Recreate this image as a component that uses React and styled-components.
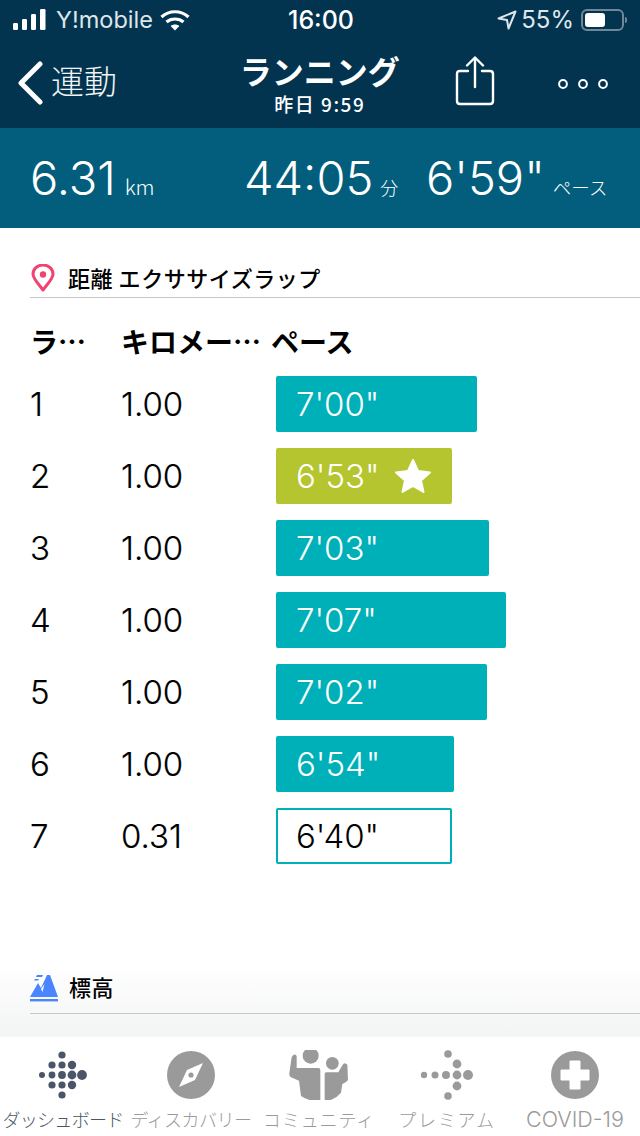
import React from "react";
import styled, { createGlobalStyle } from "styled-components";

const Global = createGlobalStyle`
  html, body { margin: 0; padding: 0; background: #fff; }
  * { box-sizing: border-box; }
`;
const SANS = `"Liberation Sans", "Noto Sans CJK JP", sans-serif`;
const UI = `Inter, "Noto Sans CJK JP", sans-serif`;
const CJK = `"Noto Sans CJK JP", sans-serif`;

const Page = styled.div`
  width: 640px; height: 1136px; display: flex; flex-direction: column; overflow: hidden;
  font-family: ${SANS}; color: #000; background: #fff;
`;
const Header = styled.header`
  height: 128px; background: #02344f; color: #fff; display: flex; flex-direction: column;
`;
const StatusBar = styled.div`
  height: 40px; padding: 0 12px 0 13px; display: grid; grid-template-columns: 1fr auto 1fr; align-items: center;
  font-family: ${UI}; font-size: 24px; line-height: 40px;
`;
const StatusLeft = styled.div`display: flex; align-items: center; gap: 7px; color: #dfe6ea; font-size: 23.5px;`;
const StatusRight = styled.div`display: flex; align-items: center; justify-content: flex-end; gap: 4px; color: #dfe6ea; font-size: 24px;`;
const Clock = styled.div`font-weight: 500; font-size: 25px; margin-left: 1px;`;
const Battery = styled.div`
  width: 43px; height: 22px; border: 2px solid #6f8796; border-radius: 6px; padding: 2px; position: relative; margin-right: 4px; margin-left: 3px;
  &::after { content: ""; position: absolute; right: -5px; top: 6px; width: 2px; height: 6px; background: #6f8796; border-radius: 0 2px 2px 0; }
`;
const BatteryFill = styled.div`width: 20px; height: 14px; background: #fff; border-radius: 3px;`;
const NavBar = styled.div`flex: 1; display: flex; align-items: center; padding: 0 32px 0 16px;`;
const Back = styled.div`display: flex; align-items: center; gap: 7px; width: 202px; margin-top: -3px;`;
const BackLabel = styled.span`font-size: 33px; font-family: ${CJK}; font-weight: 300; color: #f0f4f6; margin-bottom: 6px;`;
const Title = styled.div`width: 208px; text-align: center; margin-top: 3px; white-space: nowrap;`;
const TitleMain = styled.div`font-family: ${CJK}; font-size: 32px; font-weight: 700; line-height: 36px;`;
const TitleSub = styled.div`font-family: ${CJK}; font-size: 19px; line-height: 31px; font-weight: 500; letter-spacing: 1.5px;`;
const NavIcons = styled.div`display: flex; align-items: center; gap: 63px; padding-left: 32px;`;
const ShareSlot = styled.span`display: flex; margin-top: -6px;`;

const Stats = styled.section`
  height: 100px; background: #025e7c; color: #fff; display: flex; align-items: baseline; padding: 21px 31px 0 30px;
`;
const Stat = styled.div`display: flex; align-items: baseline; gap: ${p => p.$gap}px; width: ${p => p.$w}px; white-space: nowrap;`;
const StatValue = styled.span`font-family: ${UI}; font-weight: 300; font-size: 47px; line-height: 58px;`;
const StatUnit = styled.span`font-size: ${p => p.$size || 18}px; font-family: ${CJK}; font-weight: 300;`;

const Content = styled.main`
  flex: 1; padding: 36px 0 0 30px;
  background: linear-gradient(#fff 0, #fff 735px, #f3f4f4 809px);
`;
const SectionHead = styled.div`
  height: ${p => p.$h || 34}px; display: flex; align-items: center; gap: ${p => p.$gap || 13}px; border-bottom: 1px solid #c8c8c8;
  font-family: ${CJK}; font-size: 22px; font-weight: 500; line-height: 28px; padding-bottom: ${p => p.$pb || 8}px;
  margin-top: ${p => p.$top || 0}px; letter-spacing: 0.55px;
  & > svg { flex: none; }
`;
const PinSlot = styled.span`display: flex; margin-left: 1px; margin-top: 2px;`;
const MountainSlot = styled.span`display: flex; margin-top: 4px;`;
const Table = styled.div`display: flex; flex-direction: column; gap: 16px; margin-top: 26px;`;
const Row = styled.div`display: grid; grid-template-columns: 91px 155px 1fr; align-items: center; height: 56px; font-family: ${UI}; font-weight: 300; font-size: 33px; -webkit-text-stroke: 0.2px #000;`;
const HeadRow = styled(Row)`
  height: 36px; padding-top: 2px; font-family: ${CJK}; font-size: 28px; font-weight: 700; grid-template-columns: 91px 150px 1fr; line-height: 30px; -webkit-text-stroke: 0; align-items: start;
`;
const Bar = styled.div`
  height: 56px; display: flex; align-items: center; gap: 14px; border-radius: 2px; font-family: ${UI}; font-weight: 300; font-size: 33px; -webkit-text-stroke: 0;
  color: ${p => p.$kind === "outline" ? "#000" : "#fff"};
  background: ${p => p.$kind === "best" ? "#b4c52f" : p.$kind === "outline" ? "#fff" : "#00b0b9"};
  border: ${p => p.$kind === "outline" ? "2px solid #00b0b9" : "none"};
  padding-left: ${p => p.$kind === "outline" ? 18 : 20}px;
`;
const TabBar = styled.nav`
  height: 99px; width: 640px; margin-left: -1px; background: #fff; display: grid; grid-template-columns: repeat(5, 128px); padding-top: 13px;
`;
const Tab = styled.div`
  display: flex; flex-direction: column; align-items: center; color: ${p => p.$active ? "#4a5568" : "#9a9a9a"};
  white-space: nowrap;
`;
const TabIcon = styled.div`height: 50px; margin-bottom: 6px; display: flex; align-items: center; justify-content: center;`;
const TabLabel = styled.span`font-family: ${CJK}; font-weight: 300; font-size: 18px; line-height: 26px; letter-spacing: ${p => p.$ls || 0}px;`;
const TabLabelLatin = styled.span`font-family: ${UI}; font-size: 21.5px; line-height: 26px; font-weight: 300;`;

const rows = [
  ["1", "1.00", "7'00\"", 201],
  ["2", "1.00", "6'53\"", 176, "best"],
  ["3", "1.00", "7'03\"", 213],
  ["4", "1.00", "7'07\"", 230],
  ["5", "1.00", "7'02\"", 211],
  ["6", "1.00", "6'54\"", 178],
  ["7", "0.31", "6'40\"", 176, "outline"],
];

const Signal = () => (
  <svg width="36" height="22" viewBox="0 0 36 22" fill="#fff">
    <rect x="0" y="14" width="5" height="7" rx="1.2" /><rect x="9" y="10" width="5" height="11" rx="1.2" />
    <rect x="18" y="5" width="5" height="16" rx="1.2" /><rect x="27" y="0" width="5.5" height="21" rx="1.2" />
  </svg>
);
const Wifi = () => (
  <svg width="30" height="22" viewBox="0 0 30 22" fill="none" stroke="#fff" strokeWidth="3.2">
    <path d="M1.5 8 C9 1 21 1 28.5 8" /><path d="M6.5 13 C11 9 19 9 23.5 13" />
    <path d="M15 21.5 L10.6 17 C13 15 17 15 19.4 17 Z" fill="#fff" stroke="none" />
  </svg>
);
const Arrow = () => (
  <svg width="20" height="20" viewBox="0 0 20 20" fill="none" stroke="#dfe6ea" strokeWidth="2" strokeLinejoin="round">
    <path d="M1.5 8.5 L18.5 1.5 L11.5 18.5 L10 10 Z" />
  </svg>
);
const Chevron = () => (
  <svg width="28" height="44" viewBox="0 0 28 44" fill="none" stroke="#fff" strokeWidth="5" strokeLinecap="round" strokeLinejoin="round">
    <path d="M24 3 L5 22 L24 41" />
  </svg>
);
const Share = () => (
  <svg width="40" height="50" viewBox="0 0 40 50" fill="none" stroke="#fff" strokeWidth="2.4" strokeLinecap="round" strokeLinejoin="round">
    <path d="M13 15 H5 Q2 15 2 18 V45 Q2 48 5 48 H35 Q38 48 38 45 V18 Q38 15 35 15 H27" />
    <path d="M20 31 V2" /><path d="M12 9.5 L20 1.5 L28 9.5" />
  </svg>
);
const Dots = () => (
  <svg width="50" height="12" viewBox="0 0 50 12" fill="none" stroke="#fff" strokeWidth="2">
    <circle cx="5" cy="6" r="3.9" /><circle cx="25" cy="6" r="3.9" /><circle cx="45" cy="6" r="3.9" />
  </svg>
);
const Pin = () => (
  <svg width="24" height="28" viewBox="0 0 24 28" fill="none">
    <path d="M12 26 C6 18 2 14.5 2 10 A10 9 0 0 1 22 10 C22 14.5 18 18 12 26 Z" stroke="#f0436f" strokeWidth="3" strokeLinejoin="round" />
    <circle cx="12" cy="10.5" r="3.2" fill="#f0436f" />
  </svg>
);
const Mountain = () => (
  <svg width="28" height="28" viewBox="0 0 28 28">
    <path d="M0 23 L8 9 L11 14 L17 1 H20 L28 23 Z" fill="#4a84ff" />
    <path d="M7 1 H13 L12 3 H6 Z M5 5 H9 L8 6.5 H4 Z" fill="#4a84ff" />
    <path d="M11 15 L14.5 10 L12.5 18 Z" fill="#fff" />
    <rect x="0" y="25" width="28" height="2.4" fill="#4a84ff" />
  </svg>
);
const StarIcon = () => (
  <svg width="38" height="36" viewBox="0 0 38 36" fill="#fff" stroke="#fff" strokeWidth="2" strokeLinejoin="round">
    <path d="M19 2 L24 13 L36 14.5 L27 22.5 L29.5 34 L19 28 L8.5 34 L11 22.5 L2 14.5 L14 13 Z" />
  </svg>
);
const dotGrid = [[0,-20,3.6],[-10,-10,3.6],[0,-10,3.6],[10,-10,4.2],[-20,0,3],[-10,0,3.4],[0,0,3.9],[10,0,4.4],[20,0,4.9],[-10,10,3.6],[0,10,3.6],[10,10,4.2],[0,20,3.6]];
const Fitbit = () => (
  <svg width="50" height="50" viewBox="-24 -25 50 50" fill="#4a5568">
    {dotGrid.map(([x, y, r], i) => <circle key={i} cx={x} cy={y} r={r} />)}
  </svg>
);
const Compass = () => (
  <svg width="48" height="48" viewBox="0 0 48 48">
    <circle cx="24" cy="24" r="24" fill="#9a9a9a" />
    <path d="M36 12 L28 29 L12 36 L20 19 Z" fill="#fff" />
    <circle cx="24" cy="24" r="2.6" fill="#9a9a9a" />
  </svg>
);
const Community = () => (
  <svg width="62" height="50" viewBox="27 30 186 150" fill="#9a9a9a">
    <circle cx="95" cy="47" r="24" /><circle cx="160" cy="70" r="19" />
    <path d="M38 52 Q45 38 53 48 L53 84 H118 Q124 84 124 90 V186 Q85 182 66 168 L60 122 L36 112 Q30 108 31 100 Z" />
    <path d="M137 102 Q137 97 142 97 H178 L190 76 Q197 64 205 74 L207 118 Q207 125 190 132 L186 158 Q170 178 137 186 Z" />
  </svg>
);
const premiumDots = [[-24,0,3.2],[-13,0,3.5],[-2,0,4],[9,0,4.4],[20,0,5],[9,-11,4.4],[9,11,4.4],[0,-21,3.8],[0,21,3.8]];
const Premium = () => (
  <svg width="54" height="50" viewBox="-28 -25 54 50" fill="#9a9a9a">
    {premiumDots.map(([x, y, r], i) => <circle key={i} cx={x} cy={y} r={r} />)}
  </svg>
);
const Plus = () => (
  <svg width="48" height="48" viewBox="0 0 48 48">
    <circle cx="24" cy="24" r="24" fill="#9a9a9a" />
    <path d="M19 10 H29 V19 H38 V29 H29 V38 H19 V29 H10 V19 H19 Z" fill="#fff" stroke="#fff" strokeWidth="1" strokeLinejoin="round" />
  </svg>
);

export default function App() {
  return (
    <Page>
      <Global />
      <Header>
        <StatusBar>
          <StatusLeft><Signal />Y!mobile<Wifi /></StatusLeft>
          <Clock>16:00</Clock>
          <StatusRight><Arrow />55%<Battery><BatteryFill /></Battery></StatusRight>
        </StatusBar>
        <NavBar>
          <Back><Chevron /><BackLabel>運動</BackLabel></Back>
          <Title>
            <TitleMain>ランニング</TitleMain>
            <TitleSub>昨日 9:59</TitleSub>
          </Title>
          <NavIcons><ShareSlot><Share /></ShareSlot><Dots /></NavIcons>
        </NavBar>
      </Header>
      <Stats>
        <Stat $w={214} $gap={9}><StatValue>6.31</StatValue><StatUnit $size={21}>km</StatUnit></Stat>
        <Stat $w={182} $gap={7}><StatValue>44:05</StatValue><StatUnit>分</StatUnit></Stat>
        <Stat $w={183} $gap={8}><StatValue>6'59"</StatValue><StatUnit $size={18.5}>ペース</StatUnit></Stat>
      </Stats>
      <Content>
        <SectionHead><PinSlot><Pin /></PinSlot>距離 エクササイズラップ</SectionHead>
        <Table>
          <HeadRow><span>ラ…</span><span>キロメー…</span><span>ペース</span></HeadRow>
          {rows.map(([lap, km, pace, w, kind]) => (
            <Row key={lap}>
              <span>{lap}</span><span>{km}</span>
              <Bar $kind={kind} style={{ width: w }}>{pace}{kind === "best" && <StarIcon />}</Bar>
            </Row>
          ))}
        </Table>
        <SectionHead $top={110} $h={40} $pb={16} $gap={11}><MountainSlot><Mountain /></MountainSlot>標高</SectionHead>
      </Content>
      <TabBar>
        <Tab $active><TabIcon><Fitbit /></TabIcon><TabLabel $ls={-0.7}>ダッシュボード</TabLabel></Tab>
        <Tab><TabIcon><Compass /></TabIcon><TabLabel $ls={-0.5}>ディスカバリー</TabLabel></Tab>
        <Tab><TabIcon><Community /></TabIcon><TabLabel $ls={0.9}>コミュニティ</TabLabel></Tab>
        <Tab><TabIcon><Premium /></TabIcon><TabLabel $ls={1.8}>プレミアム</TabLabel></Tab>
        <Tab><TabIcon><Plus /></TabIcon><TabLabelLatin>COVID-19</TabLabelLatin></Tab>
      </TabBar>
    </Page>
  );
}
